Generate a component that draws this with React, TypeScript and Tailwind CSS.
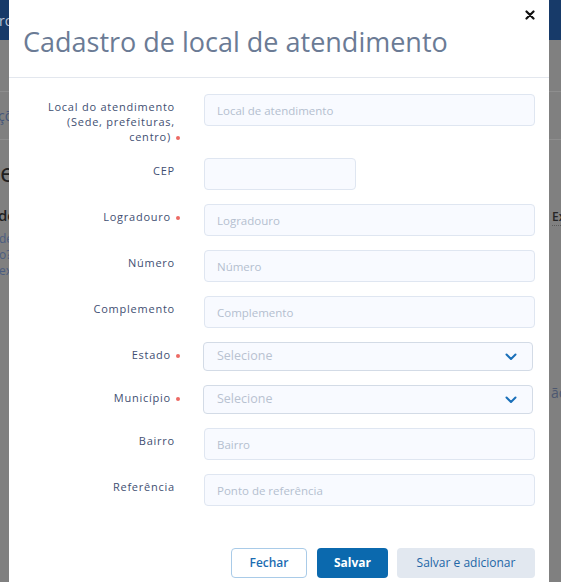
import React from 'react';

const font = "font-['Open_Sans','Liberation_Sans',sans-serif]";

const Required = () => (
  <span className="ml-[5px] -mr-[5px] inline-block h-[4px] w-[4px] rounded-full bg-[#ec6a64] align-middle" />
);

const FieldLabel = ({ children, required }: { children: React.ReactNode; required?: boolean }) => (
  <label className="block pt-[5px] text-right text-[11px] font-medium leading-[15px] tracking-[0.07em] text-[#3f4f72]">
    {children}
    {required && <Required />}
  </label>
);

const TextInput = ({ placeholder, short }: { placeholder?: string; short?: boolean }) => (
  <input
    placeholder={placeholder}
    className={`h-[32px] ${short ? 'w-[152px]' : 'w-full'} rounded-[4px] border border-[#dfe6f1] bg-[#f8faff] px-[12px] text-[11.5px] text-[#3f4f72] outline-none placeholder:text-[#b4bfcf]`}
  />
);

const SelectInput = () => (
  <div className="-ml-[1px] mr-[2px] flex h-[29px] items-center justify-between rounded-[4px] border border-[#d3dbe6] bg-[#f8faff] pl-[13px] pr-[15px]">
    <span className="text-[12.5px] text-[#b8c2d1]">Selecione</span>
    <svg width="12" height="8" viewBox="0 0 12 8" fill="none">
      <path d="M1.5 1.5 L6 6 L10.5 1.5" stroke="#1a6fb9" strokeWidth="2" strokeLinecap="round" strokeLinejoin="round" />
    </svg>
  </div>
);

const Row = ({ label, required, children }: { label: React.ReactNode; required?: boolean; children: React.ReactNode }) => (
  <div className="grid grid-cols-[152px_1fr] gap-x-[29px]">
    <FieldLabel required={required}>{label}</FieldLabel>
    <div>{children}</div>
  </div>
);

const App = () => {
  return (
    <div className={`relative h-[582px] w-[561px] overflow-hidden bg-[#808080] ${font}`}>
      {/* Background page (dimmed) */}
      <div className="flex h-[40px] items-center bg-[#173a69]">
        <div className="w-[9px] overflow-hidden">
          <span className="-ml-[1px] block whitespace-nowrap text-[14px] text-[#b9c4d6]">ro</span>
        </div>
      </div>
      <div className="flex">
        <div className="w-[9px] overflow-hidden">
          <div className="h-[52px] border-b border-[#8e8e8e]" />
          <div className="flex h-[48px] items-center border-b border-[#8e8e8e]">
            <span className="-ml-[2px] whitespace-nowrap text-[14px] text-[#44567a]">çõ</span>
          </div>
          <div className="mt-[17px] whitespace-nowrap text-[26px] leading-[30px] text-[#202020]">e</div>
          <div className="-ml-[2px] mt-[18px] whitespace-nowrap text-[15px] font-semibold leading-[20px] text-[#1e1e1e]">de</div>
          <div className="-ml-[1px] mt-[6px] whitespace-nowrap text-[12px] leading-[16px] text-[#4b5d80]">
            <div>de</div>
            <div>o?</div>
            <div>ex</div>
          </div>
        </div>
        <div className="flex-1" />
        <div className="w-[12px] overflow-hidden">
          <div className="h-[52px] border-b border-[#8e8e8e]" />
          <div className="h-[48px] border-b border-[#8e8e8e]" />
          <div className="ml-[3px] mt-[69px] inline-block whitespace-nowrap border-b border-dotted border-[#5a5a5a] text-[12px] font-semibold leading-[16px] text-[#252525]">
            Ex
          </div>
          <div className="ml-[2px] mt-[155px] whitespace-nowrap text-[14px] text-[#4d5870]">ão</div>
        </div>
      </div>

      {/* Modal */}
      <div className="absolute left-[9px] top-0 h-[600px] w-[540px] bg-white">
        <div className="relative border-b border-[#e3e7ee] px-[14px] pb-[20px] pt-[26px]">
          <h1 className="text-[27px] font-normal leading-[31px] text-[#6b7b95]">Cadastro de local de atendimento</h1>
          <button className="absolute right-[14px] top-[10px] p-0">
            <svg width="10" height="10" viewBox="0 0 10 10">
              <path d="M1.5 1.5 L8.5 8.5 M8.5 1.5 L1.5 8.5" stroke="#111" strokeWidth="2.2" strokeLinecap="round" />
            </svg>
          </button>
        </div>

        <div className="flex flex-col gap-[14px] px-[14px] pt-[16px]">
          <Row label="Local do atendimento (Sede, prefeituras, centro)" required>
            <TextInput placeholder="Local de atendimento" />
          </Row>
          <Row label="CEP">
            <TextInput short />
          </Row>
          <Row label="Logradouro" required>
            <TextInput placeholder="Logradouro" />
          </Row>
          <Row label="Número">
            <TextInput placeholder="Número" />
          </Row>
          <Row label="Complemento">
            <TextInput placeholder="Complemento" />
          </Row>
          <Row label="Estado" required>
            <SelectInput />
          </Row>
          <Row label="Município" required>
            <SelectInput />
          </Row>
          <Row label="Bairro">
            <TextInput placeholder="Bairro" />
          </Row>
          <Row label="Referência">
            <TextInput placeholder="Ponto de referência" />
          </Row>
        </div>

        <div className="mt-[42px] flex justify-end gap-[10px] px-[14px]">
          <button className="h-[30px] w-[76px] rounded-[4px] border border-[#a9cbe8] bg-white text-[12px] font-semibold text-[#1b6cb2]">
            Fechar
          </button>
          <button className="h-[30px] w-[71px] rounded-[4px] bg-[#0b69ae] text-[12px] font-bold text-white">
            Salvar
          </button>
          <button className="ml-[-1px] h-[30px] w-[138px] rounded-[4px] bg-[#e2e8f0] text-[12px] font-medium text-[#2366a6]">
            Salvar e adicionar
          </button>
        </div>
      </div>
    </div>
  );
};

export default App;
